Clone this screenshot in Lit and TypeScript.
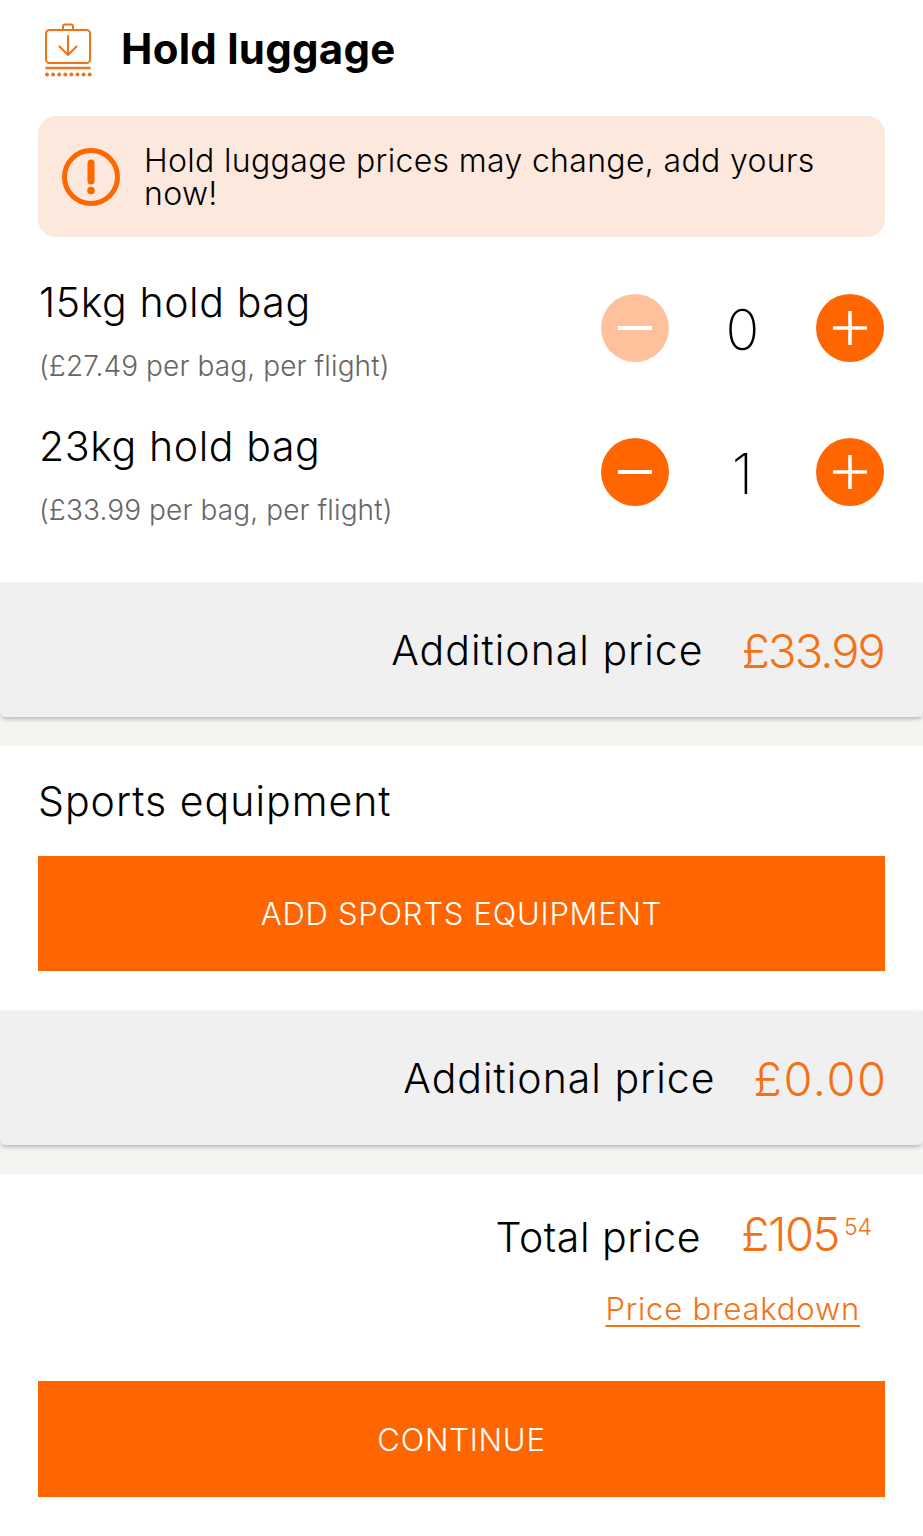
import { LitElement, html, css } from "lit";
import { customElement } from "lit/decorators.js";

const minus = html`<svg viewBox="0 0 34 34" width="34" height="34"><path d="M1 17h32" stroke="#fff" stroke-width="4" stroke-linecap="round"/></svg>`;
const plus = html`<svg viewBox="0 0 34 34" width="34" height="34"><path d="M1 17h32M17 1v32" stroke="#fff" stroke-width="3.6" stroke-linecap="round"/></svg>`;

@customElement("app-root")
export class AppRoot extends LitElement {
  static styles = css`
    :host { display: block; width: 923px; height: 1536px; overflow: hidden; background: #fff; font-family: Inter, Lato, "Liberation Sans", sans-serif; color: #000; font-weight: 300; }
    .head { display: flex; align-items: center; gap: 28px; height: 116px; padding: 0 0 17px 44px; box-sizing: border-box; }
    .head svg { display: block; }
    h1 { margin: 0; font-size: 42px; font-weight: 700; line-height: 50px; margin-top: -1px; letter-spacing: .25px; }
    .notice { margin: 0 38px; height: 121px; box-sizing: border-box; background: #fde8dd; border-radius: 18px; display: flex; align-items: center; gap: 23px; padding: 0 40px 0 23px; font-size: 32px; line-height: 33px; letter-spacing: .33px; }
    .notice svg { flex: none; }
    .bags { height: 346px; box-sizing: border-box; padding: 40px 39px 0 39px; display: flex; flex-direction: column; }
    .bag { height: 144px; display: flex; justify-content: space-between; }
    .name { font-size: 41px; line-height: 50px; letter-spacing: .6px; }
    .sub { font-size: 28px; line-height: 36px; margin-top: 21px; color: #666; letter-spacing: .1px; }
    .stepper { display: flex; align-items: flex-start; padding-top: 17px; }
    .round { width: 68px; height: 68px; border-radius: 50%; background: #ff6600; display: flex; align-items: center; justify-content: center; }
    .round.off { background: #ffc19c; }
    .count { width: 147px; text-align: center; font-size: 56px; line-height: 72px; font-weight: 200; }
    .addl { height: 134px; box-sizing: border-box; background: #f0f0f0; border-radius: 0 0 6px 6px; box-shadow: 0 2px 4px rgba(0,0,0,.25); display: flex; align-items: center; justify-content: flex-end; gap: 38px; padding: 0 39px 0 0; font-size: 41px; letter-spacing: 1px; position: relative; }
    .orange { color: #f47216; }
    .addl .orange { font-size: 47px; letter-spacing: -1.9px; }
    .addl .orange.wide { letter-spacing: 1.5px; margin-right: -3.5px; }
    .gap { height: 29px; background: #f5f4f1; }
    .sports { height: 265px; box-sizing: border-box; padding: 29px 38px 0; background: #fff; border-radius: 6px 6px 0 0; }
    h2 { margin: 0 0 29px; font-size: 41px; line-height: 52px; font-weight: 300; letter-spacing: 1px; }
    .cta { height: 115px; background: #ff6600; color: #fff; display: flex; align-items: center; justify-content: center; font-size: 31px; letter-spacing: .75px; }
    .total { height: 362px; box-sizing: border-box; background: #fff; padding: 33px 38px 0; border-radius: 6px 6px 0 0; }
    .tline { display: flex; justify-content: flex-end; align-items: flex-start; gap: 40px; padding-right: 13px; height: 62px; }
    .tlabel { font-size: 41px; line-height: 60px; letter-spacing: .55px; }
    .tval { font-size: 47px; line-height: 54px; display: flex; letter-spacing: -1.5px; }
    .tval sup { font-size: 23px; line-height: 24px; margin: 8px 0 0 5px; letter-spacing: 0; }
    .link { display: block; text-align: right; padding-right: 25px; font-size: 31px; line-height: 40px; margin: 20px 0 52px; color: #f47216; text-decoration: underline; text-underline-offset: 5px; text-decoration-thickness: 2px; letter-spacing: .8px; }
    .total .cta { height: 116px; }
  `;

  private bag(name: string, sub: string, n: number) {
    return html`<div class="bag">
      <div><div class="name">${name}</div><div class="sub">${sub}</div></div>
      <div class="stepper">
        <div class="round ${n === 0 ? "off" : ""}">${minus}</div>
        <div class="count">${n}</div>
        <div class="round">${plus}</div>
      </div>
    </div>`;
  }

  render() {
    return html`
      <div class="head">
        <svg width="49" height="54" viewBox="0 0 49 54" fill="none" stroke="#f47216">
          <rect x="2" y="7" width="44" height="33" rx="3.5" stroke-width="2"/>
          <path d="M19 7V3.5Q19 1.5 21 1.5H27Q29 1.5 29 3.5V7" stroke-width="2"/>
          <path d="M24 13V32M15.5 23.5L24 32L32.5 23.5" stroke-width="2" stroke-linecap="round" stroke-linejoin="round"/>
          <path d="M1.5 45H46.5" stroke-width="2.4"/>
          <path d="M3 51.5H46" stroke-width="4" stroke-linecap="round" stroke-dasharray="0 6.1"/>
        </svg>
        <h1>Hold luggage</h1>
      </div>
      <div class="notice">
        <svg width="60" height="60" viewBox="0 0 60 60" fill="none">
          <circle cx="30" cy="30" r="26.5" stroke="#ff6600" stroke-width="5"/>
          <path d="M30 16V34" stroke="#ff6600" stroke-width="7" stroke-linecap="round"/>
          <circle cx="30" cy="43.5" r="3.8" fill="#ff6600"/>
        </svg>
        <span>Hold luggage prices may change, add yours now!</span>
      </div>
      <div class="bags">
        ${this.bag("15kg hold bag", "(£27.49 per bag, per flight)", 0)}
        ${this.bag("23kg hold bag", "(£33.99 per bag, per flight)", 1)}
      </div>
      <div class="addl"><span>Additional price</span><span class="orange">£33.99</span></div>
      <div class="gap"></div>
      <div class="sports">
        <h2>Sports equipment</h2>
        <div class="cta">ADD SPORTS EQUIPMENT</div>
      </div>
      <div class="addl"><span>Additional price</span><span class="orange wide">£0.00</span></div>
      <div class="gap"></div>
      <div class="total">
        <div class="tline">
          <span class="tlabel">Total price</span>
          <span class="tval orange">£105<sup>54</sup></span>
        </div>
        <a class="link">Price breakdown</a>
        <div class="cta">CONTINUE</div>
      </div>
    `;
  }
}
